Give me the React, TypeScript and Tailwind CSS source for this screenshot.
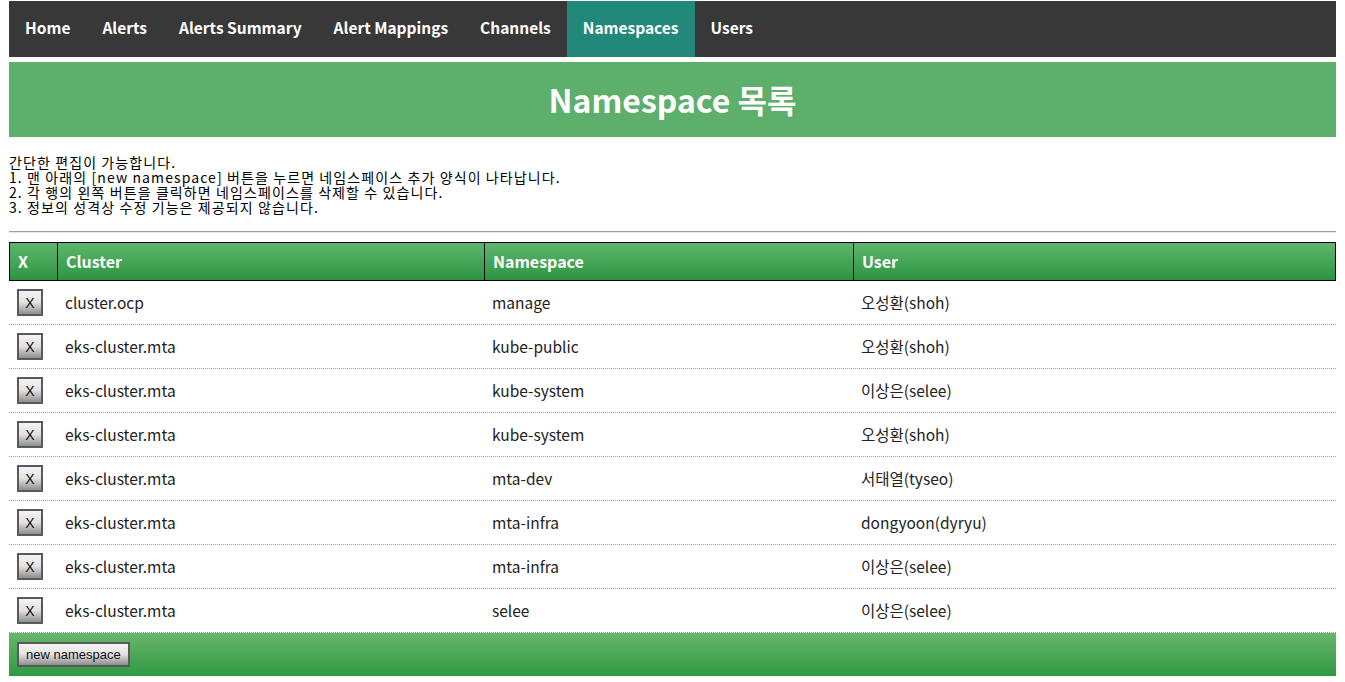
import React from "react";

const navItems = ["Home", "Alerts", "Alerts Summary", "Alert Mappings", "Channels", "Namespaces", "Users"];

const rows = [
  { cluster: "cluster.ocp", ns: "manage", user: "오성환(shoh)" },
  { cluster: "eks-cluster.mta", ns: "kube-public", user: "오성환(shoh)" },
  { cluster: "eks-cluster.mta", ns: "kube-system", user: "이상은(selee)" },
  { cluster: "eks-cluster.mta", ns: "kube-system", user: "오성환(shoh)" },
  { cluster: "eks-cluster.mta", ns: "mta-dev", user: "서태열(tyseo)" },
  { cluster: "eks-cluster.mta", ns: "mta-infra", user: "dongyoon(dyryu)" },
  { cluster: "eks-cluster.mta", ns: "mta-infra", user: "이상은(selee)" },
  { cluster: "eks-cluster.mta", ns: "selee", user: "이상은(selee)" },
];

const font = { fontFamily: '"Noto Sans CJK KR", "Noto Sans", sans-serif' };

function XButton() {
  return (
    <button className="w-[26px] h-[27px] flex items-center justify-center border-2 border-[#5a5a5a] bg-gradient-to-b from-[#f4f4f4] via-[#e2e2e2] to-[#8e8e8e] text-[14px] leading-none text-[#111] font-['Liberation_Sans',sans-serif]">
      X
    </button>
  );
}

export default function App() {
  return (
    <div className="min-h-screen bg-white px-[9px] pt-[1px] text-[#222]" style={font}>
      {/* Nav */}
      <nav className="flex h-[56px] bg-[#383838]">
        {navItems.map((item) => (
          <a
            key={item}
            className={
              "flex items-center px-4 pb-[3px] text-[15.5px] font-bold text-white " +
              (item === "Namespaces" ? "bg-[#21887a]" : "")
            }
          >
            {item}
          </a>
        ))}
      </nav>

      {/* Title */}
      <div className="mt-[5px] h-[75px] bg-[#5daf6c] flex items-center justify-center pb-[1px]">
        <h1 className="text-[32px] font-bold text-white">Namespace 목록</h1>
      </div>

      {/* Description */}
      <div className="mt-[18px] text-[14px] leading-[15px] tracking-[1.1px] text-black">
        <div>간단한 편집이 가능합니다.</div>
        <div>1. 맨 아래의 [new namespace] 버튼을 누르면 네임스페이스 추가 양식이 나타납니다.</div>
        <div>2. 각 행의 왼쪽 버튼을 클릭하면 네임스페이스를 삭제할 수 있습니다.</div>
        <div>3. 정보의 성격상 수정 기능은 제공되지 않습니다.</div>
      </div>

      <div className="mt-[16px] border-t border-[#a0a0a0] border-b border-b-[#e8e8e8]" />

      {/* Table */}
      <div className="mt-[9px]">
        <div className="grid grid-cols-[47px_427px_369px_1fr] h-[39px] border border-black bg-gradient-to-b from-[#5db66e] to-[#2a9540] text-white font-bold text-[16px]">
          <div className="flex items-center pl-[8px] pb-[1px]">X</div>
          <div className="flex items-center pl-[8px] pb-[1px] border-l border-black">Cluster</div>
          <div className="flex items-center pl-[8px] pb-[1px] border-l border-black">Namespace</div>
          <div className="flex items-center pl-[8px] pb-[1px] border-l border-black">User</div>
        </div>
        {rows.map((r, i) => (
          <div
            key={i}
            className="grid grid-cols-[48px_427px_369px_1fr] h-[44px] border-b border-dotted border-[#7f9bf5] text-[15.5px]"
          >
            <div className="flex items-center pl-[8px]">
              <XButton />
            </div>
            <div className="flex items-center pl-[8px]">{r.cluster}</div>
            <div className="flex items-center pl-[8px]">{r.ns}</div>
            <div className="flex items-center pl-[8px]">{r.user}</div>
          </div>
        ))}
        <div className="h-[43px] flex items-center pl-[8px] bg-gradient-to-b from-[#67b56b] to-[#2d9a44]">
          <button className="h-[25px] px-[7px] border-2 border-[#5a5a5a] bg-gradient-to-b from-[#f4f4f4] via-[#e2e2e2] to-[#8e8e8e] text-[13px] leading-none text-[#111] font-['Liberation_Sans',sans-serif]">
            new namespace
          </button>
        </div>
      </div>
    </div>
  );
}
